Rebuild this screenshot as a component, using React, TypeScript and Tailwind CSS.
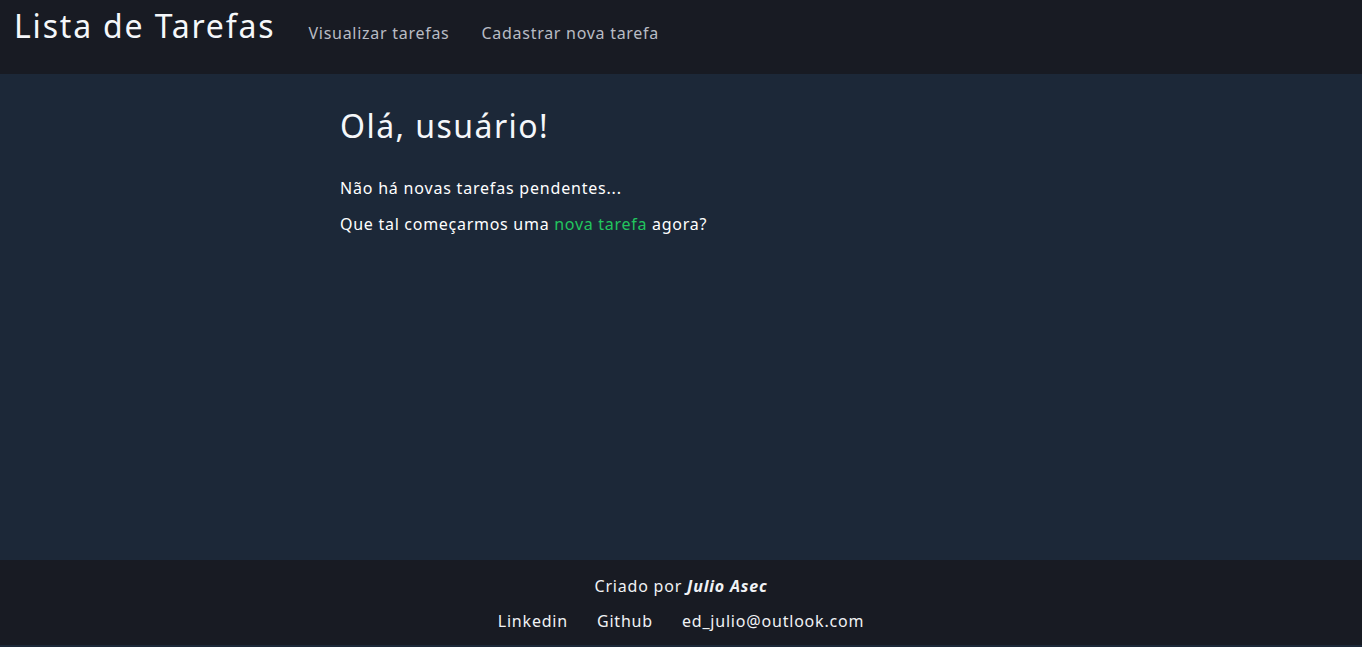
export default function App() {
    return (
        <div className="min-h-screen bg-[#1c2838] text-white" style={{ fontFamily: '"Noto Sans", "Open Sans", sans-serif' }}>
            <header className="h-[74px] bg-[#181b23] flex items-start px-[14px]">
                <a className="text-[32px] leading-none mt-[10px] tracking-[0.057em] text-[#f5f7fa]">Lista de Tarefas</a>
                <nav className="flex gap-8 ml-[33px] mt-[21px] text-[16px] tracking-[0.045em] text-[#b8bcc4]">
                    <a>Visualizar tarefas</a>
                    <a>Cadastrar nova tarefa</a>
                </nav>
            </header>
            <main className="h-[486px]">
                <div className="w-[682px] mx-auto pt-[32px]">
                    <h1 className="text-[32px] leading-[40px] tracking-[0.045em] text-[#f5f7fa]">Olá, usuário!</h1>
                    <p className="mt-[30px] text-[16px] leading-[24px] tracking-[0.05em]">Não há novas tarefas pendentes...</p>
                    <p className="mt-[12px] text-[16px] leading-[24px] tracking-[0.045em]">
                        Que tal começarmos uma <a className="text-[#22c55e]">nova tarefa</a> agora?
                    </p>
                </div>
            </main>
            <footer className="h-[85px] bg-[#181b23] flex flex-col items-center pt-[14px] text-[16px] tracking-[0.05em] text-[#f0f2f5]">
                <p className="leading-[24px]">
                    Criado por <strong className="italic font-bold">Julio Asec</strong>
                </p>
                <div className="flex gap-[29px] mt-[11px] leading-[24px]">
                    <a>Linkedin</a>
                    <a>Github</a>
                    <a>ed_julio@outlook.com</a>
                </div>
            </footer>
        </div>
    )
}
